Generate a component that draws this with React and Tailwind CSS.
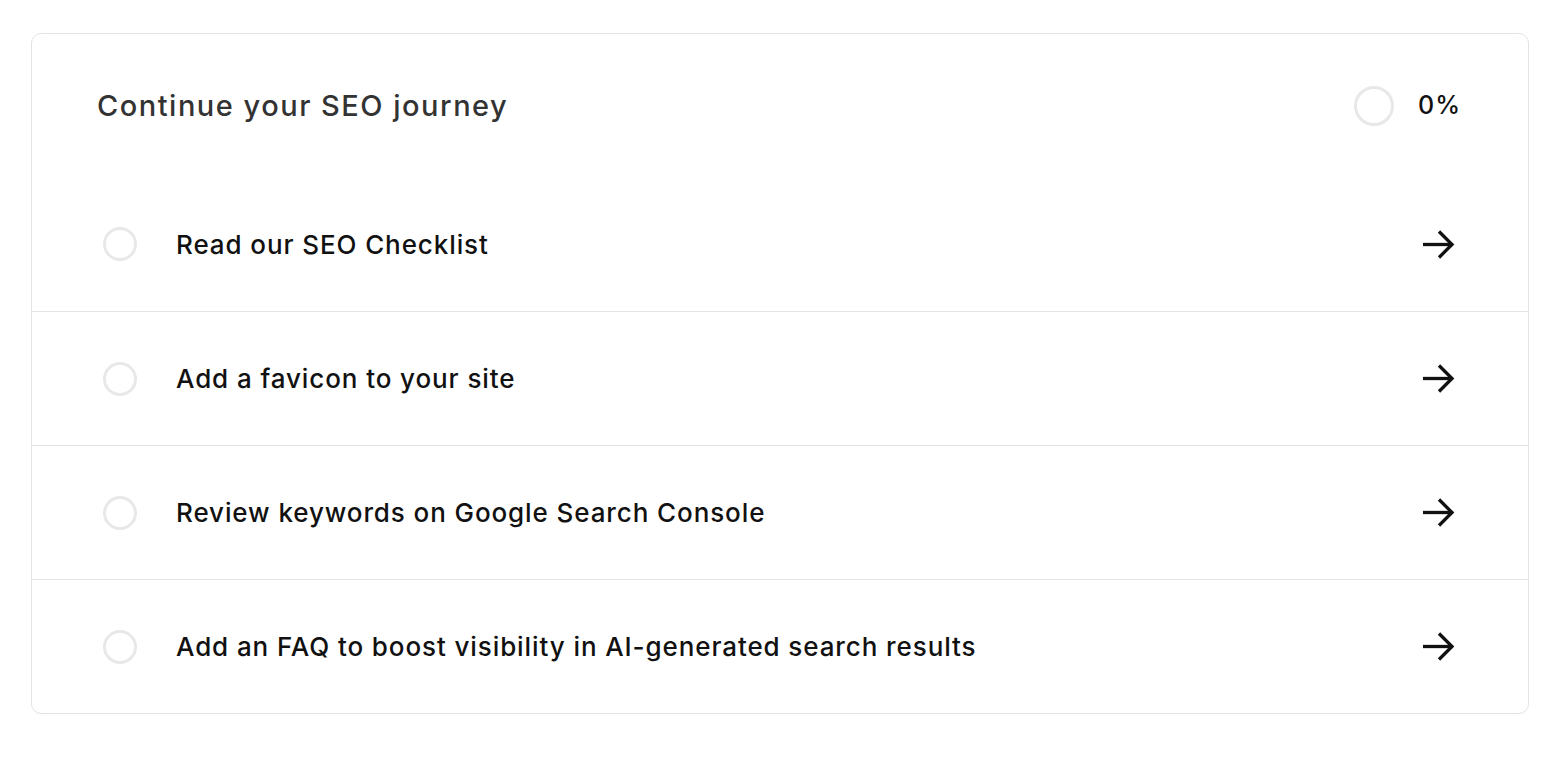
const tasks = [
  'Read our SEO Checklist',
  'Add a favicon to your site',
  'Review keywords on Google Search Console',
  'Add an FAQ to boost visibility in AI-generated search results',
]

function Ring({ size = 34 }) {
  return (
    <span
      className="block rounded-full border-[3px] border-[#e8e8e8]"
      style={{ width: size, height: size }}
    />
  )
}

function Arrow() {
  return (
    <svg width="33" height="29" viewBox="0 0 33 29" fill="none" stroke="currentColor" strokeWidth="3.3">
      <path d="M1 14.5h29.5" />
      <path d="M17 1.5l13 13-13 13" strokeLinejoin="miter" />
    </svg>
  )
}

export default function App() {
  return (
    <div className="min-h-screen bg-white px-[31px] pt-[33px] font-['Inter',sans-serif]">
      <div className="rounded-[10px] border border-[#e3e3e3] bg-white">
        {/* Header */}
        <div className="flex h-[143px] items-center justify-between pl-[65px] pr-[67px]">
          <h2 className="text-[29px] font-medium tracking-[1.5px] text-[#333]">
            Continue your SEO journey
          </h2>
          <div className="flex items-center gap-[24px]">
            <Ring size={40} />
            <span className="text-[25px] font-medium tracking-[1px] text-[#111]">0%</span>
          </div>
        </div>

        {/* Checklist */}
        <ul>
          {tasks.map((t, i) => (
            <li
              key={t}
              className={`flex h-[134px] items-center px-16 ${i > 0 ? 'border-t border-[#e3e3e3]' : ''}`}
            >
              <span className="flex w-12 justify-center">
                <Ring />
              </span>
              <span className="ml-8 flex-1 text-[26px] font-medium tracking-[0.9px] text-[#111]">{t}</span>
              <span className="flex w-12 justify-center pr-[3px] text-[#111]">
                <Arrow />
              </span>
            </li>
          ))}
        </ul>
      </div>
    </div>
  )
}
